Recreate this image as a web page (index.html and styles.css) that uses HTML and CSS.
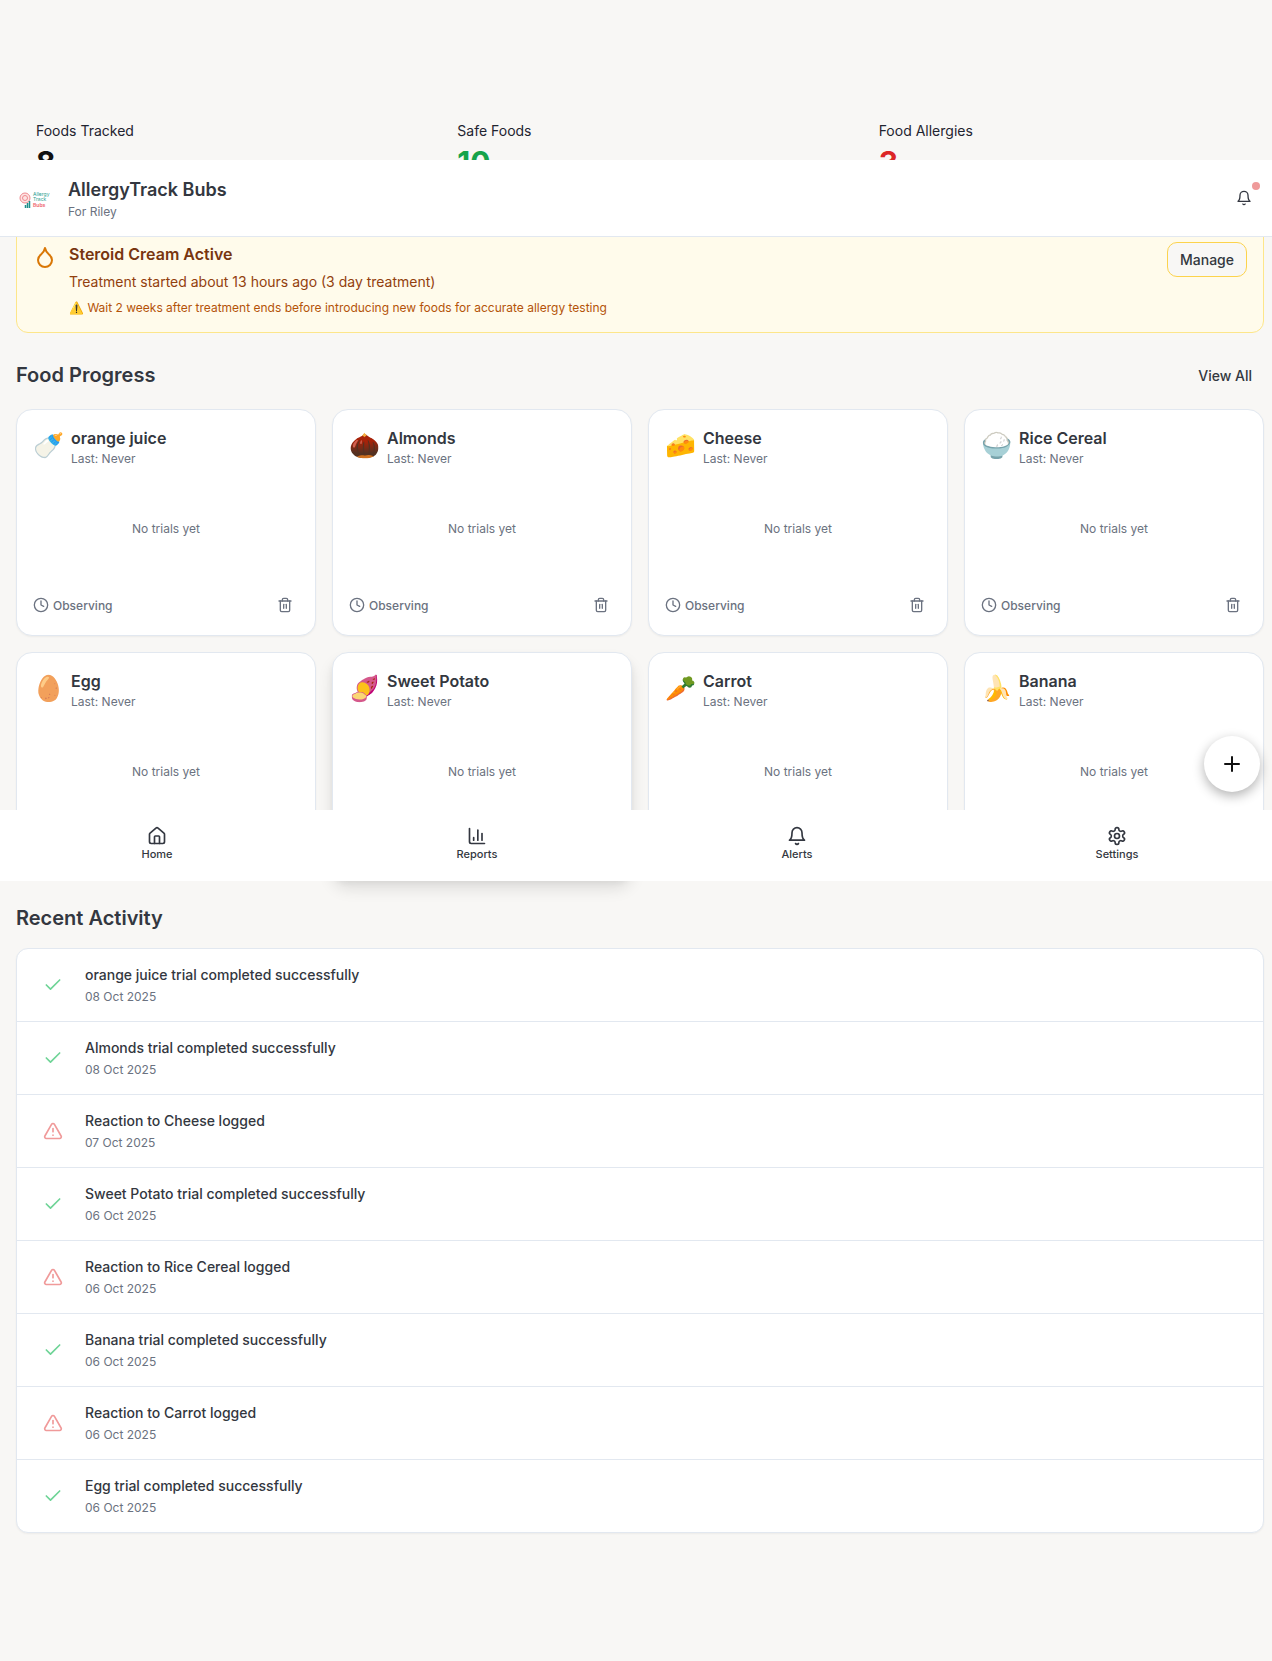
FILE: index.html
```html
<!DOCTYPE html>
<html lang="en">
<head>
    <meta charset="UTF-8">
    <meta name="viewport" content="width=device-width, initial-scale=1.0">
    <title>AllergyTrack Bubs</title>
    <link rel="stylesheet" href="styles.css">
</head>
<body>
    <header class="top-bar">
        <div class="brand">
            <svg class="logo" viewBox="0 0 32 20" width="32" height="20">
                <circle cx="6" cy="10" r="5" fill="#fde3e3" stroke="#ef8a8f" stroke-width="1"/>
                <circle cx="6" cy="10" r="2.500" fill="none" stroke="#ef8a8f" stroke-width="1"/>
                <path d="M6.500 20v-3M8.500 20v-5M10.500 20v-7" stroke="#1f8f8a" stroke-width="1.500"/>
                <text x="14" y="8" class="logo-text logo-teal">Allergy</text>
                <text x="14" y="13" class="logo-text logo-teal">Track</text>
                <text x="14" y="19" class="logo-text logo-red">Bubs</text>
            </svg>
            <div>
                <div class="brand-name">AllergyTrack Bubs</div>
                <div class="brand-sub">For Riley</div>
            </div>
        </div>
        <div class="bell">
            <svg class="icon-16" viewBox="0 0 24 24"><path d="M6 8a6 6 0 0 1 12 0c0 7 3 9 3 9H3s3-2 3-9"/><path d="M10.300 21a1.940 1.940 0 0 0 3.400 0"/></svg>
            <span class="bell-dot"></span>
        </div>
    </header>

    <main class="page">
        <section class="stats">
            <div class="stat"><div class="stat-label">Foods Tracked</div><div class="stat-value">8</div></div>
            <div class="stat"><div class="stat-label">Safe Foods</div><div class="stat-value green">10</div></div>
            <div class="stat"><div class="stat-label">Food Allergies</div><div class="stat-value red">3</div></div>
        </section>

        <section class="alert">
            <svg class="alert-icon" viewBox="0 0 24 24"><path d="M12 22a7 7 0 0 0 7-7c0-2-1-3.900-3-5.500s-3.500-4-4-6.500c-.5 2.500-2 4.900-4 6.500C6 11.100 5 13 5 15a7 7 0 0 0 7 7z"/></svg>
            <div class="alert-body">
                <div class="alert-title">Steroid Cream Active</div>
                <div class="alert-text">Treatment started about 13 hours ago (3 day treatment)</div>
                <div class="alert-note">⚠️ Wait 2 weeks after treatment ends before introducing new foods for accurate allergy testing</div>
            </div>
            <button class="manage">Manage</button>
        </section>

        <div class="section-head">
            <h2>Food Progress</h2>
            <span class="view-all">View All</span>
        </div>

        <section class="food-grid" id="foodGrid"></section>

        <h2 class="activity-title">Recent Activity</h2>
        <section class="activity" id="activity"></section>
    </main>

    <button class="fab">
        <svg class="icon-24" viewBox="0 0 24 24"><path d="M5 12h14"/><path d="M12 5v14"/></svg>
    </button>

    <nav class="bottom-nav">
        <div class="nav-item">
            <svg class="icon-20" viewBox="0 0 24 24"><path d="M15 21v-8a1 1 0 0 0-1-1h-4a1 1 0 0 0-1 1v8"/><path d="M3 10a2 2 0 0 1 .709-1.528l7-6a2 2 0 0 1 2.582 0l7 6A2 2 0 0 1 21 10v9a2 2 0 0 1-2 2H5a2 2 0 0 1-2-2z"/></svg>
            <span>Home</span>
        </div>
        <div class="nav-item">
            <svg class="icon-20" viewBox="0 0 24 24"><path d="M3 3v16a2 2 0 0 0 2 2h16"/><path d="M8 17v-3"/><path d="M13 17V5"/><path d="M18 17V9"/></svg>
            <span>Reports</span>
        </div>
        <div class="nav-item">
            <svg class="icon-20" viewBox="0 0 24 24"><path d="M6 8a6 6 0 0 1 12 0c0 7 3 9 3 9H3s3-2 3-9"/><path d="M10.300 21a1.940 1.940 0 0 0 3.400 0"/></svg>
            <span>Alerts</span>
        </div>
        <div class="nav-item">
            <svg class="icon-20" viewBox="0 0 24 24"><path d="M12.220 2h-.44a2 2 0 0 0-2 2v.18a2 2 0 0 1-1 1.730l-.43.250a2 2 0 0 1-2 0l-.15-.08a2 2 0 0 0-2.730.730l-.22.380a2 2 0 0 0 .730 2.730l.15.100a2 2 0 0 1 1 1.720v.510a2 2 0 0 1-1 1.740l-.15.090a2 2 0 0 0-.730 2.730l.22.380a2 2 0 0 0 2.730.730l.15-.08a2 2 0 0 1 2 0l.43.250a2 2 0 0 1 1 1.730V20a2 2 0 0 0 2 2h.44a2 2 0 0 0 2-2v-.18a2 2 0 0 1 1-1.730l.43-.250a2 2 0 0 1 2 0l.15.080a2 2 0 0 0 2.730-.730l.22-.390a2 2 0 0 0-.730-2.730l-.15-.080a2 2 0 0 1-1-1.740v-.500a2 2 0 0 1 1-1.740l.15-.090a2 2 0 0 0 .730-2.730l-.22-.380a2 2 0 0 0-2.730-.730l-.15.080a2 2 0 0 1-2 0l-.43-.250a2 2 0 0 1-1-1.730V4a2 2 0 0 0-2-2z"/><circle cx="12" cy="12" r="3"/></svg>
            <span>Settings</span>
        </div>
    </nav>

    <script>
        const foods = [
            ['🍼', 'orange juice'],
            ['🌰', 'Almonds'],
            ['🧀', 'Cheese'],
            ['🍚', 'Rice Cereal'],
            ['🥚', 'Egg'],
            ['🍠', 'Sweet Potato'],
            ['🥕', 'Carrot'],
            ['🍌', 'Banana']
        ];

        const activity = [
            ['ok', 'orange juice trial completed successfully', '08 Oct 2025'],
            ['ok', 'Almonds trial completed successfully', '08 Oct 2025'],
            ['bad', 'Reaction to Cheese logged', '07 Oct 2025'],
            ['ok', 'Sweet Potato trial completed successfully', '06 Oct 2025'],
            ['bad', 'Reaction to Rice Cereal logged', '06 Oct 2025'],
            ['ok', 'Banana trial completed successfully', '06 Oct 2025'],
            ['bad', 'Reaction to Carrot logged', '06 Oct 2025'],
            ['ok', 'Egg trial completed successfully', '06 Oct 2025']
        ];

        const foodGrid = document.getElementById('foodGrid');
        foods.forEach(([emoji, name]) => {
            const card = document.createElement('div');
            card.className = name === 'Sweet Potato' ? 'food-card lifted' : 'food-card';
            card.innerHTML = `
                <div class="food-head">
                    <span class="food-emoji">${emoji}</span>
                    <div>
                        <div class="food-name">${name}</div>
                        <div class="food-last">Last: Never</div>
                    </div>
                </div>
                <div class="food-empty">No trials yet</div>
                <div class="food-foot">
                    <span class="food-status">
                        <svg class="icon-16" viewBox="0 0 24 24"><circle cx="12" cy="12" r="10"/><path d="M12 6v6l4 2"/></svg>
                        Observing
                    </span>
                    <svg class="icon-16" viewBox="0 0 24 24"><path d="M3 6h18"/><path d="M19 6v14a2 2 0 0 1-2 2H7a2 2 0 0 1-2-2V6"/><path d="M8 6V4a2 2 0 0 1 2-2h4a2 2 0 0 1 2 2v2"/><path d="M10 11v6"/><path d="M14 11v6"/></svg>
                </div>
            `;
            foodGrid.appendChild(card);
        });

        const okIcon = '<svg class="icon-20 ok" viewBox="0 0 24 24"><path d="M20 6 9 17l-5-5"/></svg>';
        const badIcon = '<svg class="icon-20 bad" viewBox="0 0 24 24"><path d="m21.730 18-8-14a2 2 0 0 0-3.480 0l-8 14A2 2 0 0 0 4 21h16a2 2 0 0 0 1.730-3"/><path d="M12 9v4"/><path d="M12 17h.01"/></svg>';
        const activityList = document.getElementById('activity');
        activity.forEach(([kind, text, date]) => {
            const row = document.createElement('div');
            row.className = 'activity-row';
            row.innerHTML = `
                <div class="activity-icon">${kind === 'ok' ? okIcon : badIcon}</div>
                <div>
                    <div class="activity-text">${text}</div>
                    <div class="activity-date">${date}</div>
                </div>
            `;
            activityList.appendChild(row);
        });
    </script>
</body>
</html>
```

FILE: styles.css
```css
* {
    box-sizing: border-box;
}
body {
    margin: 0;
    min-height: 1661px;
    position: relative;
    font-family: Inter, "Noto Sans", sans-serif;
    background-color: #f8f7f5;
    color: #333740;
    overflow-x: hidden;
}
svg {
    fill: none;
    stroke: currentColor;
    stroke-width: 2;
    stroke-linecap: round;
    stroke-linejoin: round;
    flex-shrink: 0;
}
.icon-16 {
    width: 16px;
    height: 16px;
}
.icon-20 {
    width: 20px;
    height: 20px;
}
.icon-24 {
    width: 24px;
    height: 24px;
}

/* overlays: header, bottom nav, add button */
.top-bar {
    position: absolute;
    top: 160px;
    left: 0;
    right: 0;
    height: 77px;
    z-index: 5;
    display: flex;
    align-items: center;
    justify-content: space-between;
    padding: 0 16px 0 19px;
    background-color: #fff;
    border-bottom: 1px solid #e2e8f0;
}
.brand {
    display: flex;
    align-items: center;
    gap: 17px;
}
.logo {
    stroke: none;
    width: 32px;
    height: 20px;
    overflow: hidden;
}
.logo path, .logo circle {
    stroke-linecap: butt;
}
.logo-text {
    font-family: Inter, sans-serif;
    font-size: 5px;
    stroke: none;
}
.logo-teal {
    fill: #2a9d8f;
}
.logo-red {
    fill: #ef6f76;
    font-weight: 700;
}
.brand-name {
    margin-top: 2px;
    font-size: 18px;
    font-weight: 600;
    line-height: 26px;
    color: #333740;
}
.brand-sub {
    font-size: 12px;
    line-height: 18px;
    color: #6b7280;
}
.bell {
    position: relative;
    width: 24px;
    height: 24px;
    display: flex;
    align-items: center;
    justify-content: center;
    color: #333740;
}
.bell-dot {
    position: absolute;
    top: -4px;
    right: -4px;
    width: 8px;
    height: 8px;
    border-radius: 50%;
    background-color: #ef9a9a;
}
.bottom-nav {
    position: absolute;
    top: 810px;
    left: 0;
    right: 0;
    height: 71px;
    z-index: 5;
    display: flex;
    justify-content: center;
    gap: 256px;
    padding-left: 2px;
    background-color: #fff;
}
.nav-item {
    width: 64px;
    padding-top: 16px;
    display: flex;
    flex-direction: column;
    align-items: center;
    font-size: 11px;
    font-weight: 500;
    line-height: 16px;
    color: #333740;
}
.fab {
    position: absolute;
    top: 736px;
    left: 1204px;
    width: 56px;
    height: 56px;
    z-index: 4;
    display: flex;
    align-items: center;
    justify-content: center;
    padding: 0;
    border: none;
    border-radius: 50%;
    background-color: #fff;
    color: #111;
    box-shadow: 0 4px 12px rgba(0, 0, 0, 0.3);
}

/* page flow */
.page {
    padding: 101px 8px 0 16px;
}
.stats {
    display: grid;
    grid-template-columns: repeat(3, 1fr);
    gap: 16px;
    margin-bottom: 24px;
}
.stat {
    padding: 20px;
}
.stat-label {
    font-size: 14px;
    line-height: 20px;
    color: #1f2430;
}
.stat-value {
    margin-top: 3px;
    margin-bottom: 1px;
    font-size: 30px;
    font-weight: 700;
    line-height: 36px;
    color: #111;
}
.green {
    color: #16a34a;
}
.red {
    color: #dc2626;
}
.alert {
    display: flex;
    gap: 12px;
    padding: 16px;
    background-color: #fffbeb;
    border: 1px solid #fde68a;
    border-radius: 12px;
}
.alert-icon {
    width: 24px;
    height: 24px;
    color: #d97706;
    margin-top: 3px;
}
.alert-body {
    flex: 1;
}
.alert-title {
    font-size: 16px;
    font-weight: 600;
    line-height: 24px;
    color: #78350f;
}
.alert-text {
    margin-top: 6px;
    font-size: 14px;
    line-height: 20px;
    color: #92400e;
}
.alert-note {
    margin-top: 8px;
    font-size: 12px;
    line-height: 16px;
    color: #b45309;
}
.manage {
    align-self: flex-start;
    width: 80px;
    height: 35px;
    padding: 0;
    font-family: inherit;
    font-size: 14px;
    font-weight: 500;
    color: #333740;
    background-color: #f8f7f5;
    border: 1px solid #fcd34d;
    border-radius: 10px;
}
.section-head {
    display: flex;
    align-items: center;
    justify-content: space-between;
    margin-top: 28px;
    margin-bottom: 20px;
    height: 28px;
    padding-right: 12px;
}
h2 {
    margin: 0;
    font-size: 20px;
    font-weight: 600;
    line-height: 28px;
    color: #333740;
}
.view-all {
    font-size: 14px;
    font-weight: 500;
    color: #333740;
}
.food-grid {
    display: grid;
    grid-template-columns: repeat(4, 1fr);
    gap: 16px;
}
.food-card {
    height: 227px;
    padding: 16px;
    display: flex;
    flex-direction: column;
    background-color: #fff;
    border: 1px solid #e2e8f0;
    border-radius: 16px;
    box-shadow: 0 1px 2px rgba(0, 0, 0, 0.05);
}
.food-card.lifted {
    box-shadow: 0 10px 15px rgba(0, 0, 0, 0.1), 0 4px 6px rgba(0, 0, 0, 0.05);
}
.food-head {
    display: flex;
    align-items: flex-start;
    gap: 8px;
}
.food-emoji {
    width: 30px;
    margin-top: 2px;
    font-size: 25px;
    line-height: 36px;
    font-family: "Noto Color Emoji", sans-serif;
}
.food-name {
    font-size: 16px;
    font-weight: 600;
    line-height: 24px;
    color: #333740;
}
.food-last {
    margin-top: 1px;
    font-size: 12px;
    line-height: 16px;
    color: #6b7280;
}
.food-empty {
    flex: 1;
    display: flex;
    align-items: center;
    justify-content: center;
    padding-bottom: 1px;
    font-size: 12px;
    color: #6b7280;
}
.food-foot {
    display: flex;
    align-items: center;
    justify-content: space-between;
    padding-right: 6px;
    height: 28px;
    color: #6b7280;
}
.food-status {
    display: flex;
    align-items: center;
    gap: 4px;
    font-size: 12px;
    font-weight: 500;
}
.activity-title {
    margin-top: 25px;
    margin-bottom: 16px;
}
.activity {
    background-color: #fff;
    border: 1px solid #e2e8f0;
    border-radius: 12px;
    overflow: hidden;
    box-shadow: 0 1px 2px rgba(0, 0, 0, 0.05);
}
.activity-row {
    display: flex;
    gap: 12px;
    padding: 16px;
    border-bottom: 1px solid #e2e8f0;
}
.activity-row:last-child {
    border-bottom: none;
}
.activity-icon {
    width: 40px;
    height: 40px;
    display: flex;
    align-items: center;
    justify-content: center;
}
.ok {
    color: #6fd497;
}
.bad {
    color: #f09a9a;
}
.activity-text {
    font-size: 14px;
    font-weight: 500;
    line-height: 20px;
    color: #333740;
}
.activity-date {
    margin-top: 4px;
    font-size: 12px;
    line-height: 16px;
    color: #6b7280;
}
```
